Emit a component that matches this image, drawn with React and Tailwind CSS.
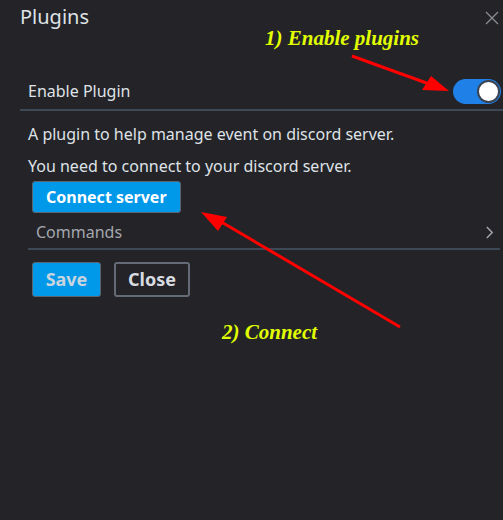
import React, { useState } from 'react';

// 화살표 주석 (스크린샷 위에 그려진 빨간 화살표)
function Arrow({ x1, y1, x2, y2, head }) {
  return (
    <g>
      <line x1={x1} y1={y1} x2={x2} y2={y2} stroke="#ff0000" strokeWidth="3" />
      <polygon points={head} fill="#ff0000" />
    </g>
  );
}

function Toggle({ on, onChange }) {
  return (
    <button
      onClick={() => onChange(!on)}
      className={`relative w-[48px] h-[25px] rounded-full ${on ? 'bg-[#1f80e8]' : 'bg-gray-600'}`}
    >
      <span
        className={`absolute top-[1px] w-[23px] h-[23px] rounded-full bg-white border-2 border-[#3b4452] ${on ? 'right-[1px]' : 'left-[1px]'}`}
      />
    </button>
  );
}

export default function App() {
  const [enabled, setEnabled] = useState(true);

  return (
    <div
      className="relative w-[503px] h-[520px] bg-[#232328] overflow-hidden text-[#dfe2e6]"
      style={{ fontFamily: '"Noto Sans", "Open Sans", sans-serif' }}
    >
      {/* 헤더 */}
      <div className="h-[73px] pl-5 pt-[3px] flex justify-between">
        <h1 className="text-[20px] leading-[28px]">Plugins</h1>
        <button className="mt-[8px] mr-[4px] w-[14px] h-[14px] text-[#8a8d94]">
          <svg viewBox="0 0 14 14" width="14" height="14">
            <path d="M1 1 L13 13 M13 1 L1 13" stroke="currentColor" strokeWidth="1.3" />
          </svg>
        </button>
      </div>

      {/* 플러그인 활성화 */}
      <div className="ml-5 pl-2 pr-[2px] h-[38px] flex items-center justify-between border-b-2 border-[#3e4958]">
        <span className="text-[16px]">Enable Plugin</span>
        <Toggle on={enabled} onChange={setEnabled} />
      </div>

      {/* 본문 */}
      <div className="pl-7 pr-[3px]">
        <p className="mt-[12px] text-[16px] leading-[22px]">A plugin to help manage event on discord server.</p>
        <p className="mt-[10px] text-[16px] leading-[22px]">You need to connect to your discord server.</p>
        <button className="mt-[4px] ml-1 h-[32px] px-[13px] rounded-[3px] bg-[#0098e8] border border-[#5c6470] text-white font-bold text-[16px]">
          Connect server
        </button>
        <div className="h-[37px] pt-[3px] pl-2 pr-[6px] flex items-center justify-between border-b-2 border-[#3e4958]">
          <span className="text-[16px] text-[#a3a7ae]">Commands</span>
          <svg viewBox="0 0 10 16" width="9" height="15" className="text-[#a3a7ae]">
            <path d="M2 2 L8 8 L2 14" stroke="currentColor" strokeWidth="1.6" fill="none" />
          </svg>
        </div>
        <div className="mt-[12px] ml-1 flex gap-[13px]">
          <button className="h-[35px] w-[69px] rounded-[3px] bg-[#0098e8] border border-[#5c6470] text-[#c9d4df] font-bold text-[18px]">
            Save
          </button>
          <button className="h-[35px] w-[76px] rounded-[3px] border-2 border-[#646b76] text-[#d8dbe0] font-bold text-[18px]">
            Close
          </button>
        </div>
      </div>

      {/* 주석 */}
      <div
        className="absolute left-[265px] top-[23px] text-[21px] font-bold italic text-[#e2ff00]"
        style={{ fontFamily: '"Liberation Serif", serif' }}
      >
        1) Enable plugins
      </div>
      <div
        className="absolute left-[222px] top-[317px] text-[21px] font-bold italic text-[#e2ff00]"
        style={{ fontFamily: '"Liberation Serif", serif' }}
      >
        2) Connect
      </div>
      <svg className="absolute left-0 top-0 pointer-events-none" width="503" height="520">
        <Arrow x1={352} y1={56} x2={432} y2={85} head="449,91 422,90 431,76" />
        <Arrow x1={400} y1={327} x2={218} y2={220} head="201,212 227,217 218,231" />
      </svg>
    </div>
  );
}
